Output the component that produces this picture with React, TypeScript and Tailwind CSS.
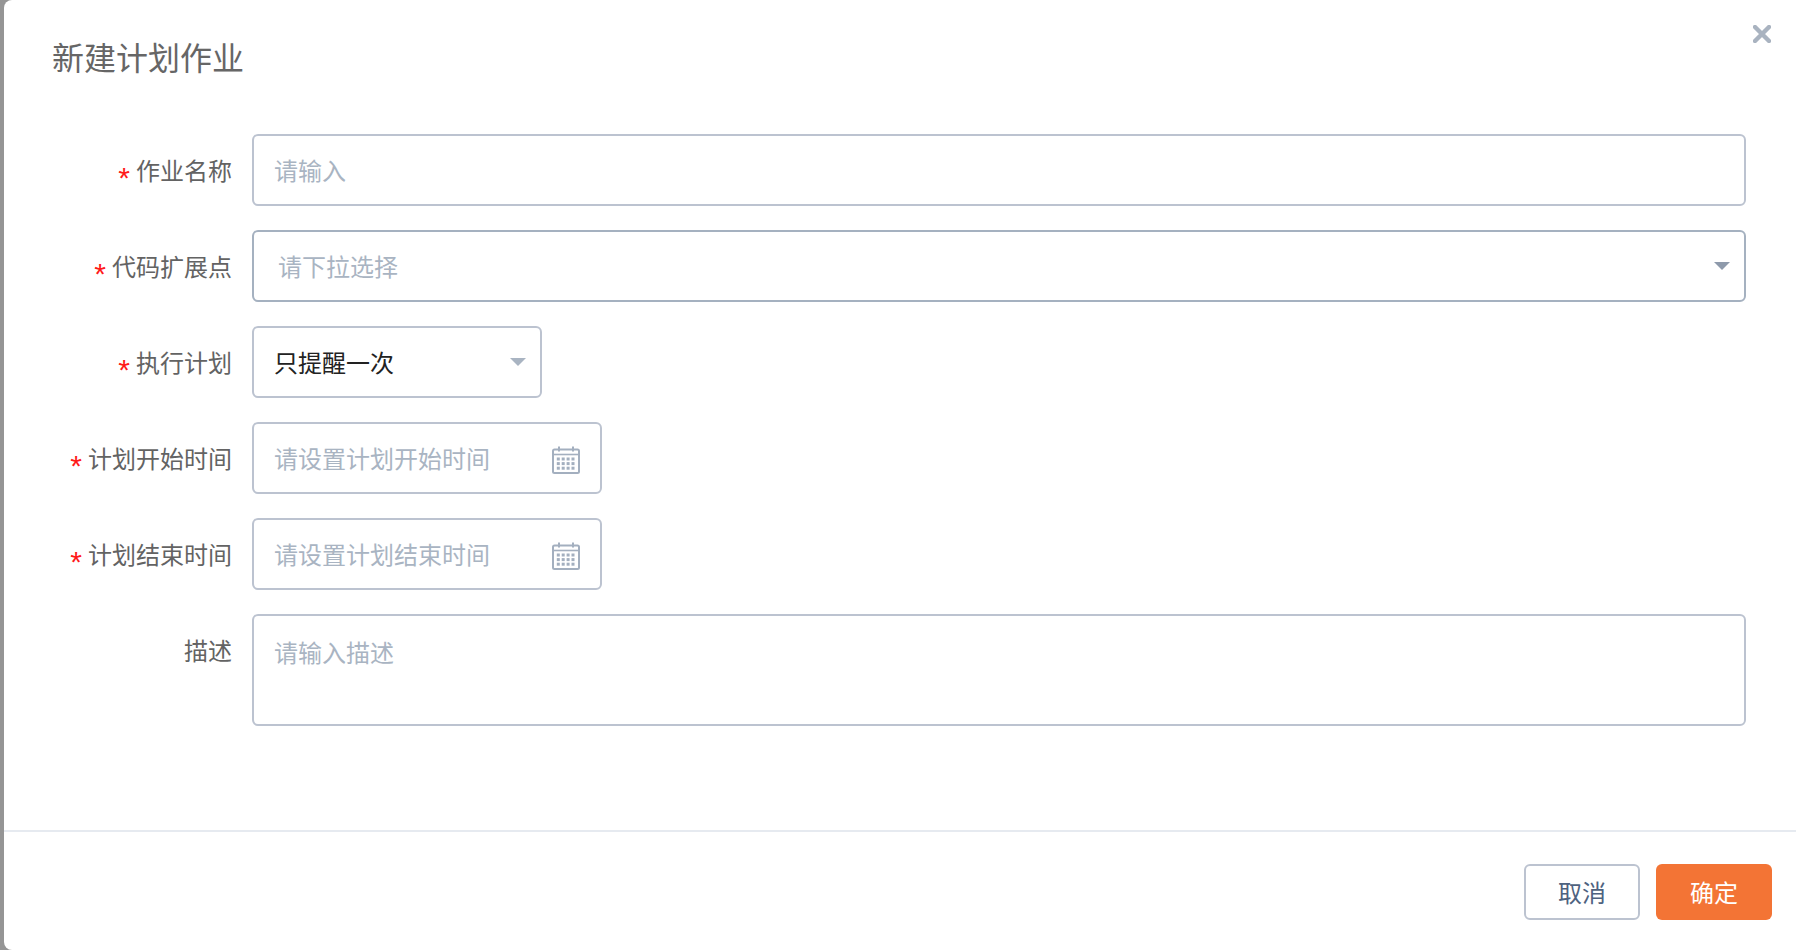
const fontStack = { fontFamily: '"Noto Sans CJK SC", "Liberation Sans", sans-serif' };

function FieldLabel({ text, required = true }: { text: string; required?: boolean }) {
  return (
    <label className="h-[72px] w-[228px] shrink-0 text-right text-[24px] leading-[72px] text-[#636363]">
      {required && (
        <span className="mr-[6px] inline-block translate-y-[5px] align-middle font-['Liberation_Sans'] text-[30px] leading-none text-[#ff1a1a]">*</span>
      )}
      {text}
    </label>
  );
}

function CaretDown({ color, className }: { color: string; className: string }) {
  return (
    <svg viewBox="0 0 16 8" width="16" height="8" className={className}>
      <path d="M0 0H16L8 8Z" fill={color} />
    </svg>
  );
}

function CalendarIcon() {
  const dots = [];
  for (let row = 0; row < 3; row++) {
    for (let col = 0; col < 4; col++) {
      dots.push(<rect key={`${row}-${col}`} x={4.8 + col * 4.9} y={11.5 + row * 4.6} width="3" height="3" fill="#a3afbf" />);
    }
  }
  return (
    <svg viewBox="0 0 28 28" width="28" height="28" className="mt-[4px] shrink-0">
      <rect x="1" y="3.5" width="26" height="23.5" rx="1.5" fill="none" stroke="#a3afbf" strokeWidth="2" />
      <path d="M1 8.5H27" stroke="#a3afbf" strokeWidth="1.6" />
      <path d="M7 0.5V5.5M21 0.5V5.5" stroke="#a3afbf" strokeWidth="2" />
      {dots}
    </svg>
  );
}

function DateInput({ placeholder }: { placeholder: string }) {
  return (
    <div className="flex h-[72px] w-[350px] items-center rounded-[6px] border-2 border-[#bcc3d0] pl-[20px] pr-[20px]">
      <input
        placeholder={placeholder}
        className="min-w-0 flex-1 text-[24px] outline-none placeholder:text-[#a9b4c2]"
      />
      <CalendarIcon />
    </div>
  );
}

export default function App() {
  return (
    <div className="h-[950px] w-[1796px] overflow-hidden bg-[#959595] pl-[4px]" style={fontStack}>
      <div className="relative flex h-full flex-col rounded-l-[8px] bg-white">
        <button className="absolute right-[25px] top-[25px]">
          <svg viewBox="0 0 18 18" width="18" height="18" className="block">
            <path d="M2 2L16 16M16 2L2 16" stroke="#a9b3c0" strokeWidth="4.4" strokeLinecap="round" />
          </svg>
        </button>

        <h1 className="pl-[48px] pt-[32px] text-[32px] font-normal leading-[48px] text-[#666666]">新建计划作业</h1>

        <div className="flex flex-1 flex-col gap-[24px] pr-[50px] pt-[54px]">
          <div className="flex gap-[20px]">
            <FieldLabel text="作业名称" />
            <input
              placeholder="请输入"
              className="h-[72px] flex-1 rounded-[6px] border-2 border-[#bcc3d0] pb-[2px] pl-[20px] text-[24px] outline-none placeholder:text-[#a9b4c2]"
            />
          </div>

          <div className="flex gap-[20px]">
            <FieldLabel text="代码扩展点" />
            <div className="flex h-[72px] flex-1 items-center justify-between rounded-[6px] border-2 border-[#a5b1c0] pl-[24px] pr-[14px]">
              <span className="text-[24px] text-[#a9b4c2]">请下拉选择</span>
              <CaretDown color="#8e9aab" className="-mt-[1px]" />
            </div>
          </div>

          <div className="flex gap-[20px]">
            <FieldLabel text="执行计划" />
            <div className="flex h-[72px] w-[290px] items-center justify-between rounded-[6px] border-2 border-[#bcc3d0] pl-[20px] pr-[14px]">
              <span className="text-[24px] text-[#222222]">只提醒一次</span>
              <CaretDown color="#a9b4c2" className="-mt-[1px]" />
            </div>
          </div>

          <div className="flex gap-[20px]">
            <FieldLabel text="计划开始时间" />
            <DateInput placeholder="请设置计划开始时间" />
          </div>

          <div className="flex gap-[20px]">
            <FieldLabel text="计划结束时间" />
            <DateInput placeholder="请设置计划结束时间" />
          </div>

          <div className="flex gap-[20px]">
            <FieldLabel text="描述" required={false} />
            <textarea
              placeholder="请输入描述"
              className="h-[112px] flex-1 resize-none rounded-[6px] border-2 border-[#bcc3d0] pl-[20px] pt-[18px] text-[24px] leading-[36px] outline-none placeholder:text-[#a9b4c2]"
            />
          </div>
        </div>

        <div className="flex h-[120px] justify-end gap-[16px] border-t-2 border-[#e6eaf0] pr-[24px] pt-[32px]">
          <button className="h-[56px] w-[116px] rounded-[6px] border-2 border-[#bcc3d0] text-[24px] text-[#4e6280]">取消</button>
          <button className="h-[56px] w-[116px] rounded-[6px] bg-[#f37435] text-[24px] text-white">确定</button>
        </div>
      </div>
    </div>
  );
}
